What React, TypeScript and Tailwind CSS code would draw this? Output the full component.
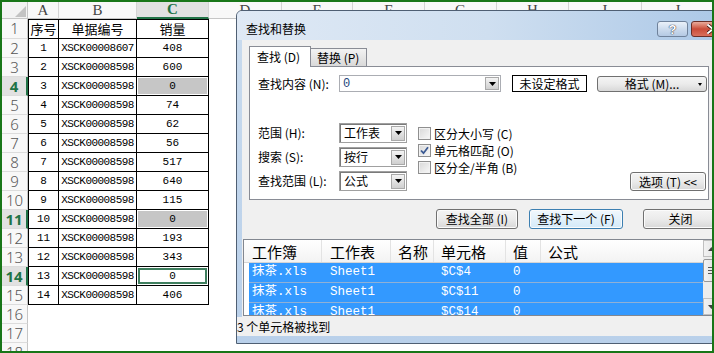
import React from "react";

const cjk = "font-['Noto_Sans_CJK_SC',sans-serif]";
const mono = "font-['Liberation_Mono','Noto_Sans_CJK_SC',monospace]";

const data: [string, string, string][] = [
  ["序号", "单据编号", "销量"],
  ["1", "XSCK00008607", "408"],
  ["2", "XSCK00008598", "600"],
  ["3", "XSCK00008598", "0"],
  ["4", "XSCK00008598", "74"],
  ["5", "XSCK00008598", "62"],
  ["6", "XSCK00008598", "56"],
  ["7", "XSCK00008598", "517"],
  ["8", "XSCK00008598", "640"],
  ["9", "XSCK00008598", "115"],
  ["10", "XSCK00008598", "0"],
  ["11", "XSCK00008598", "193"],
  ["12", "XSCK00008598", "343"],
  ["13", "XSCK00008598", "0"],
  ["14", "XSCK00008598", "406"],
];

const colHeads = [
  { k: "A", w: "w-[31px]" },
  { k: "B", w: "w-[78px]" },
  { k: "C", w: "w-[72px]" },
  { k: "D", w: "w-[73px]" },
  { k: "E", w: "w-[71px]" },
  { k: "F", w: "w-[72px]" },
  { k: "G", w: "w-[72px]" },
  { k: "H", w: "w-[72px]" },
  { k: "I", w: "w-[73px]" },
  { k: "J", w: "w-[72px]" },
];

const hotRows = [4, 11, 14];

function Sheet() {
  return (
    <div>
      {/* column headers */}
      <div className="flex h-[17px]">
        <div className="relative w-[26px] shrink-0 border-r border-b border-r-[#c6c6c6] border-b-[#c6c6c6] bg-[#f3f3f3]">
          <svg className="absolute right-[1px] bottom-[1px]" width="11" height="11" viewBox="0 0 11 11">
            <polygon points="11,0 11,11 0,11" fill="#c3c3c3" />
          </svg>
        </div>
        {colHeads.map((c) => {
          const sel = c.k === "C";
          return (
            <div
              key={c.k}
              className={`${c.w} shrink-0 flex items-center justify-center border-r border-r-[#d4d4d4] font-['Liberation_Serif',serif] text-[15px] ${
                sel
                  ? "bg-[#e1e1e1] border-b-2 border-b-[#217346] text-[#217346] font-bold"
                  : "bg-[#f8f8f8] border-b border-b-[#c6c6c6] text-[#444]"
              }`}
            >
              {c.k}
            </div>
          );
        })}
      </div>

      {Array.from({ length: 18 }, (_, i) => i + 1).map((n) => {
        const d = data[n - 1];
        const hot = hotRows.includes(n);
        const first = n === 1;
        return (
          <div key={n} className={`flex ${first ? "h-[20px]" : "h-[19px]"}`}>
            <div
              className={`w-[26px] shrink-0 flex items-center justify-center border-b border-b-[#dcdcdc] font-['Noto_Sans',sans-serif] text-[15px] ${
                hot
                  ? "bg-[#e1e1e1] border-r-2 border-r-[#217346] text-[#217346] font-bold"
                  : "bg-[#f8f8f8] border-r border-r-[#c6c6c6] text-[#555] font-light"
              }`}
            >
              {n}
            </div>
            {d && (
              <>
                <div
                  className={`w-[31px] shrink-0 flex items-center justify-center border-l border-r border-b border-black ${
                    first ? `border-t ${cjk} text-[13px]` : `${mono} text-[11px]`
                  }`}
                >
                  {d[0]}
                </div>
                <div
                  className={`w-[78px] shrink-0 flex items-center justify-center border-r border-b border-black ${
                    first ? `border-t ${cjk} text-[13px]` : `${mono} text-[11px] tracking-[-0.55px]`
                  }`}
                >
                  {d[1]}
                </div>
                <div
                  className={`w-[72px] shrink-0 flex p-[1px] border-r border-b border-black ${
                    first ? `border-t ${cjk} text-[13px]` : `${mono} text-[11px]`
                  }`}
                >
                  <div
                    className={`flex-1 flex items-center justify-center ${
                      n === 4 || n === 11
                        ? "bg-[#c6c6c6]"
                        : n === 14
                        ? "border-2 border-[#3f7f5f]"
                        : ""
                    }`}
                  >
                    {d[2]}
                  </div>
                </div>
              </>
            )}
          </div>
        );
      })}
    </div>
  );
}

function DropBtn() {
  return (
    <div className="w-[14px] h-[15px] mr-[1px] flex items-center justify-center border border-[#a9a9a9] bg-linear-to-b from-[#f4f4f4] to-[#cfcfcf]">
      <svg width="7" height="4" viewBox="0 0 7 4">
        <polygon points="0,0 7,0 3.5,4" fill="#000" />
      </svg>
    </div>
  );
}

function Select({ value }: { value: string }) {
  return (
    <div className="w-[68px] h-[20px] flex items-center border border-[#a0a0a0] bg-white shadow-[inset_1px_1px_0_#7a7a7a]">
      <span className="flex-1 pl-[4px] text-[12px]">{value}</span>
      <DropBtn />
    </div>
  );
}

function Check({ on, label }: { on?: boolean; label: string }) {
  return (
    <div className="flex items-center h-[17px]">
      <div className="w-[13px] h-[13px] flex items-center justify-center border border-[#8f8f8f] bg-linear-to-br from-[#d8d8d8] to-[#f8f8f8] shadow-[inset_0_0_0_1px_#f2f2f2]">
        {on && (
          <svg width="9" height="9" viewBox="0 0 9 9">
            <path d="M1 4.5 L3.5 7.2 L8 1.2" stroke="#3b5a93" strokeWidth="1.8" fill="none" />
          </svg>
        )}
      </div>
      <span className="ml-[3px] text-[12px]">{label}</span>
    </div>
  );
}

function Btn({ children, w, h, focus }: { children: React.ReactNode; w: string; h: string; focus?: boolean }) {
  return (
    <div
      className={`${w} ${h} shrink-0 flex items-center justify-center rounded-[3px] border text-[12px] shadow-[inset_0_0_0_1px_#fbfbfb] ${
        focus
          ? "border-[#3c7fb1] bg-linear-to-b from-[#f1f8fd] to-[#d4eaf9]"
          : "border-[#707070] bg-linear-to-b from-[#f4f4f4] via-[#ebebeb] to-[#d8d8d8]"
      }`}
    >
      {children}
    </div>
  );
}

const results = [
  ["抹茶.xls", "Sheet1", "$C$4", "0"],
  ["抹茶.xls", "Sheet1", "$C$11", "0"],
  ["抹茶.xls", "Sheet1", "$C$14", "0"],
];

function ResultList() {
  return (
    <div className="ml-[1px] mt-[10px] w-[478px] h-[77px] flex border border-[#828790] bg-white overflow-hidden">
      <div className="w-[459px] shrink-0 flex flex-col">
        <div className="h-[23px] shrink-0 flex border-b border-[#d5d5d5] bg-linear-to-b from-white to-[#f3f3f3] text-[15px]">
          <div className="w-[78px] pl-[8px] flex items-center border-r border-[#e3e3e3]">工作簿</div>
          <div className="w-[69px] pl-[8px] flex items-center border-r border-[#e3e3e3]">工作表</div>
          <div className="w-[43px] pl-[7px] flex items-center border-r border-[#e3e3e3]">名称</div>
          <div className="w-[72px] pl-[7px] flex items-center border-r border-[#e3e3e3]">单元格</div>
          <div className="w-[35px] pl-[7px] flex items-center border-r border-[#e3e3e3]">值</div>
          <div className="flex-1 pl-[7px] flex items-center">公式</div>
        </div>
        {results.map((r, i) => (
          <div
            key={i}
            className={`ml-[5px] h-[20px] shrink-0 flex bg-[#3399ff] border-b border-[#8fb0d6] text-white ${mono} text-[12.5px]`}
          >
            <div className="w-[73px] pl-[3px] flex items-center">{r[0]}</div>
            <div className="w-[112px] pl-[8px] flex items-center">{r[1]}</div>
            <div className="w-[72px] pl-[7px] flex items-center">{r[2]}</div>
            <div className="flex-1 pl-[7px] flex items-center">{r[3]}</div>
          </div>
        ))}
      </div>
      <div className="flex-1 flex flex-col bg-[#ececec]">
        <div className="h-[17px] flex items-center justify-center border border-[#c0c0c0] bg-linear-to-r from-[#f2f2f2] to-[#e0e0e0]">
          <svg width="7" height="4" viewBox="0 0 7 4">
            <polygon points="3.5,0 7,4 0,4" fill="#404040" />
          </svg>
        </div>
        <div className="mt-[2px] h-[23px] flex flex-col items-center justify-center gap-[2px] border border-[#979797] rounded-[2px] bg-linear-to-r from-[#f4f4f4] to-[#dadada]">
          <div className="w-[7px] h-px bg-[#555]" />
          <div className="w-[7px] h-px bg-[#555]" />
          <div className="w-[7px] h-px bg-[#555]" />
        </div>
        <div className="flex-1" />
        <div className="h-[17px] flex items-center justify-center border border-[#c0c0c0] bg-linear-to-r from-[#f2f2f2] to-[#e0e0e0]">
          <svg width="7" height="4" viewBox="0 0 7 4">
            <polygon points="0,0 7,0 3.5,4" fill="#404040" />
          </svg>
        </div>
      </div>
    </div>
  );
}

function Dialog() {
  return (
    <div className={`absolute left-[234px] top-[8px] w-[504px] h-[334px] flex flex-col rounded-t-[6px] border border-[#4f5f73] bg-linear-to-b from-[#c9dbee] to-[#b9d0ea] ${cjk} text-black`}>
      {/* title bar */}
      <div className="h-[29px] shrink-0 flex items-start rounded-t-[5px] bg-linear-to-r from-[#dfe9f5] via-[#cfdff0] to-[#a9c6e6]">
        <span className="ml-[9px] mt-[12px] text-[12px] leading-none">查找和替换</span>
        <div className="ml-auto mr-[5px] mt-[10px] flex gap-[3px]">
          <div className="w-[31px] h-[16px] flex items-center justify-center rounded-[3px] border border-[#6f829b] bg-linear-to-b from-[#eaf1f9] via-[#cddcee] to-[#b4c9e3]">
            <span className="font-['Liberation_Sans',sans-serif] font-bold text-[13px] leading-none text-white [text-shadow:0_0_1px_#223,0_0_1px_#223]">?</span>
          </div>
          <div className="w-[43px] h-[16px] flex items-center justify-center rounded-[3px] border border-[#6b2f27] bg-linear-to-b from-[#e8ab9c] via-[#c94b38] to-[#d9705d]">
            <svg width="12" height="10" viewBox="0 0 12 10">
              <path d="M1 1 L11 9 M11 1 L1 9" stroke="#3a1410" strokeWidth="3.6" strokeLinecap="round" />
              <path d="M1 1 L11 9 M11 1 L1 9" stroke="#ffffff" strokeWidth="2" strokeLinecap="round" />
            </svg>
          </div>
        </div>
      </div>

      {/* client area */}
      <div className="mx-[5px] h-[277px] shrink-0 bg-[#f0f0f0] text-[12px] leading-none">
        {/* tabs */}
        <div className="ml-[7px] mt-[6px] h-[21px] flex items-end">
          <div className="relative z-10 w-[62px] h-[21px] flex items-center pl-[7px] border-t border-l border-r border-[#898c95] bg-white">
            查找 (D)
          </div>
          <div className="w-[56px] h-[18px] mb-[1px] flex items-center pl-[6px] border-t border-r border-[#898c95] bg-linear-to-b from-[#f3f3f3] to-[#d9d9d9]">
            替换 (P)
          </div>
        </div>
        {/* panel */}
        <div className="ml-[7px] -mt-px w-[460px] h-[134px] border border-[#898c95] bg-white pl-[8px] pt-[8px]">
          <div className="flex items-center h-[17px]">
            <span className="w-[81px] shrink-0">查找内容 (N):</span>
            <div className="w-[162px] h-[17px] flex items-center border border-[#abadb3] bg-white">
              <span className={`flex-1 pl-[3px] text-[#23467c] ${mono} text-[12px]`}>0</span>
              <div className="w-[14px] h-[13px] mr-[1px] flex items-center justify-center border border-[#a9a9a9] bg-linear-to-b from-[#f4f4f4] to-[#cfcfcf]">
                <svg width="7" height="4" viewBox="0 0 7 4">
                  <polygon points="0,0 7,0 3.5,4" fill="#000" />
                </svg>
              </div>
            </div>
            <div className="ml-[11px] w-[75px] h-[17px] flex items-center justify-center border border-black bg-white">
              未设定格式
            </div>
            <div className="ml-[10px] w-[110px] h-[16px] relative flex items-center justify-center rounded-[3px] border border-[#707070] bg-linear-to-b from-[#f4f4f4] via-[#ebebeb] to-[#d8d8d8]">
              格式 (M)...
              <svg className="absolute right-[4px] top-[6px]" width="4" height="3" viewBox="0 0 4 3">
                <polygon points="0,0 4,0 2,3" fill="#000" />
              </svg>
            </div>
          </div>

          <div className="mt-[31px] flex">
            <div className="flex flex-col gap-[4px]">
              <div className="flex items-center h-[20px]">
                <span className="w-[81px]">范围 (H):</span>
                <Select value="工作表" />
              </div>
              <div className="flex items-center h-[20px]">
                <span className="w-[81px]">搜索 (S):</span>
                <Select value="按行" />
              </div>
              <div className="flex items-center h-[20px]">
                <span className="w-[81px]">查找范围 (L):</span>
                <Select value="公式" />
              </div>
            </div>
            <div className="ml-[11px] mt-[2px] flex flex-col">
              <Check label="区分大小写 (C)" />
              <Check on label="单元格匹配 (O)" />
              <Check label="区分全/半角 (B)" />
            </div>
            <div className="ml-auto mr-[2px] self-end">
              <Btn w="w-[76px]" h="h-[19px]">选项 (T) &lt;&lt;</Btn>
            </div>
          </div>
        </div>

        {/* action buttons */}
        <div className="ml-[194px] mt-[9px] flex">
          <Btn w="w-[82px]" h="h-[20px]">查找全部 (I)</Btn>
          <div className="ml-[11px]">
            <Btn w="w-[94px]" h="h-[20px]" focus>
              查找下一个 (F)
            </Btn>
          </div>
          <div className="ml-[20px]">
            <Btn w="w-[75px]" h="h-[20px]">关闭</Btn>
          </div>
        </div>

        <ResultList />
      </div>

      {/* status */}
      <div className="h-[19px] shrink-0 flex items-center bg-[#f0f0f0] text-[12px] leading-none">
        3 个单元格被找到
      </div>
      <div className="flex-1" />
    </div>
  );
}

export default function App() {
  return (
    <div className="relative w-[714px] h-[353px] overflow-hidden border-2 border-[#187618] bg-white text-black">
      <Sheet />
      <Dialog />
    </div>
  );
}
